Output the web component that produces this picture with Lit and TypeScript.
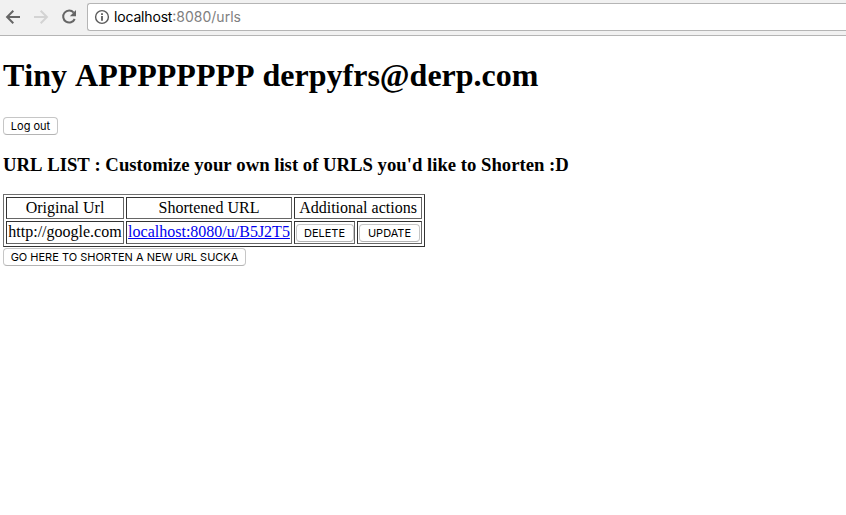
import { LitElement, html, css } from "lit";
import { customElement } from "lit/decorators.js";

@customElement("app-root")
export class AppRoot extends LitElement {
  static styles = css`
    :host {
      display: block;
      height: 515px;
      overflow: hidden;
      background: #fff;
      color: #000;
      font: 16px/18px "Liberation Serif", "Times New Roman", serif;
    }
    * { box-sizing: border-box; }
    .toolbar {
      display: flex;
      height: 36px;
      padding-top: 3px;
      background: #f1f1f1;
      border-bottom: 1px solid #b5b5b5;
      overflow: hidden;
    }
    .nav {
      flex: none;
      width: 87px;
      height: 28px;
      display: block;
    }
    .address {
      flex: 1;
      height: 28px;
      display: flex;
      align-items: center;
      padding-left: 6px;
      background: #fff;
      border: 1px solid #b5b5b5;
      border-right: 0;
      border-radius: 3px 0 0 3px;
      font: 14px/26px Inter, sans-serif;
      white-space: nowrap;
    }
    .info { flex: none; width: 16px; height: 16px; margin-right: 4px; }
    .host { letter-spacing: -0.17px; }
    .path { color: #808080; letter-spacing: 0; }
    .page { padding: 21px 3px 0; }
    h1 {
      margin: 0;
      font-size: 32px;
      line-height: 37px;
      font-kerning: none;
      white-space: nowrap;
    }
    h3 {
      margin: 19px 0 18px;
      font-size: 18.72px;
      line-height: 22px;
      font-kerning: none;
      white-space: nowrap;
    }
    button {
      display: block;
      height: 18px;
      margin: 0;
      padding: 0;
      border: 1px solid #c6c6c6;
      border-bottom-color: #b4b4b4;
      border-radius: 4px;
      background: #fff;
      color: #000;
      font: 11px/16px Inter, sans-serif;
      text-align: center;
      white-space: nowrap;
    }
    .logout { width: 55px; margin-top: 23px; }
    .delete { width: 58px; padding-right: 1px; }
    .update { width: 61px; }
    .create { width: 243px; margin-top: 1px; }
    table {
      table-layout: fixed;
      width: 422px;
      border: 1px solid #6f6f6f;
      border-bottom-color: #333;
      border-right-color: #333;
      border-collapse: separate;
      border-spacing: 2px;
    }
    td {
      height: 22px;
      padding: 0 1px;
      border: 1px solid #666;
      border-top-color: #333;
      border-left-color: #333;
      line-height: 20px;
      text-align: center;
      white-space: nowrap;
    }
    .entry td { height: 23px; padding-bottom: 1px; }
    .entry .action { padding: 2px 1px 1px; }
    .c1 { width: 118px; }
    .c2 { width: 166px; }
    .c3 { width: 61px; }
    .c4 { width: 65px; }
    a { color: #0000ee; text-decoration: underline; }
  `;

  render() {
    return html`
      <div class="toolbar">
        <svg class="nav" viewBox="0 3 87 28" fill="none" stroke-width="2">
          <path d="M20 17H7.4M13.3 10.8L7.1 17L13.3 23.2" stroke="#666" />
          <path d="M34 17H46.6M40.7 10.8L46.9 17L40.7 23.2" stroke="#d3d3d3" />
          <path d="M73.7 12.6A6 6 0 1 0 74.7 19" stroke="#666" />
          <path d="M76 10V16.2H69.8Z" fill="#666" />
        </svg>
        <div class="address">
          <svg class="info" viewBox="0 0 16 16" fill="none" stroke="#5a5a5a">
            <circle cx="8" cy="8" r="6.4" stroke-width="1.4" />
            <path d="M8 7V11.7M8 4.3V6" stroke-width="1.8" />
          </svg>
          <span class="host">localhost</span><span class="path">:8080/urls</span>
        </div>
      </div>
      <div class="page">
        <h1>Tiny APPPPPPPP derpyfrs@derp.com</h1>
        <button class="logout">Log out</button>
        <h3>URL LIST : Customize your own list of URLS you'd like to Shorten :D</h3>
        <table>
          <colgroup>
            <col class="c1" /><col class="c2" /><col class="c3" /><col class="c4" />
          </colgroup>
          <tbody>
            <tr>
              <td>Original Url</td>
              <td>Shortened URL</td>
              <td colspan="2">Additional actions</td>
            </tr>
            <tr class="entry">
              <td>http://google.com</td>
              <td><a href="#">localhost:8080/u/B5J2T5</a></td>
              <td class="action"><button class="delete">DELETE</button></td>
              <td class="action"><button class="update">UPDATE</button></td>
            </tr>
          </tbody>
        </table>
        <button class="create">GO HERE TO SHORTEN A NEW URL SUCKA</button>
      </div>
    `;
  }
}
